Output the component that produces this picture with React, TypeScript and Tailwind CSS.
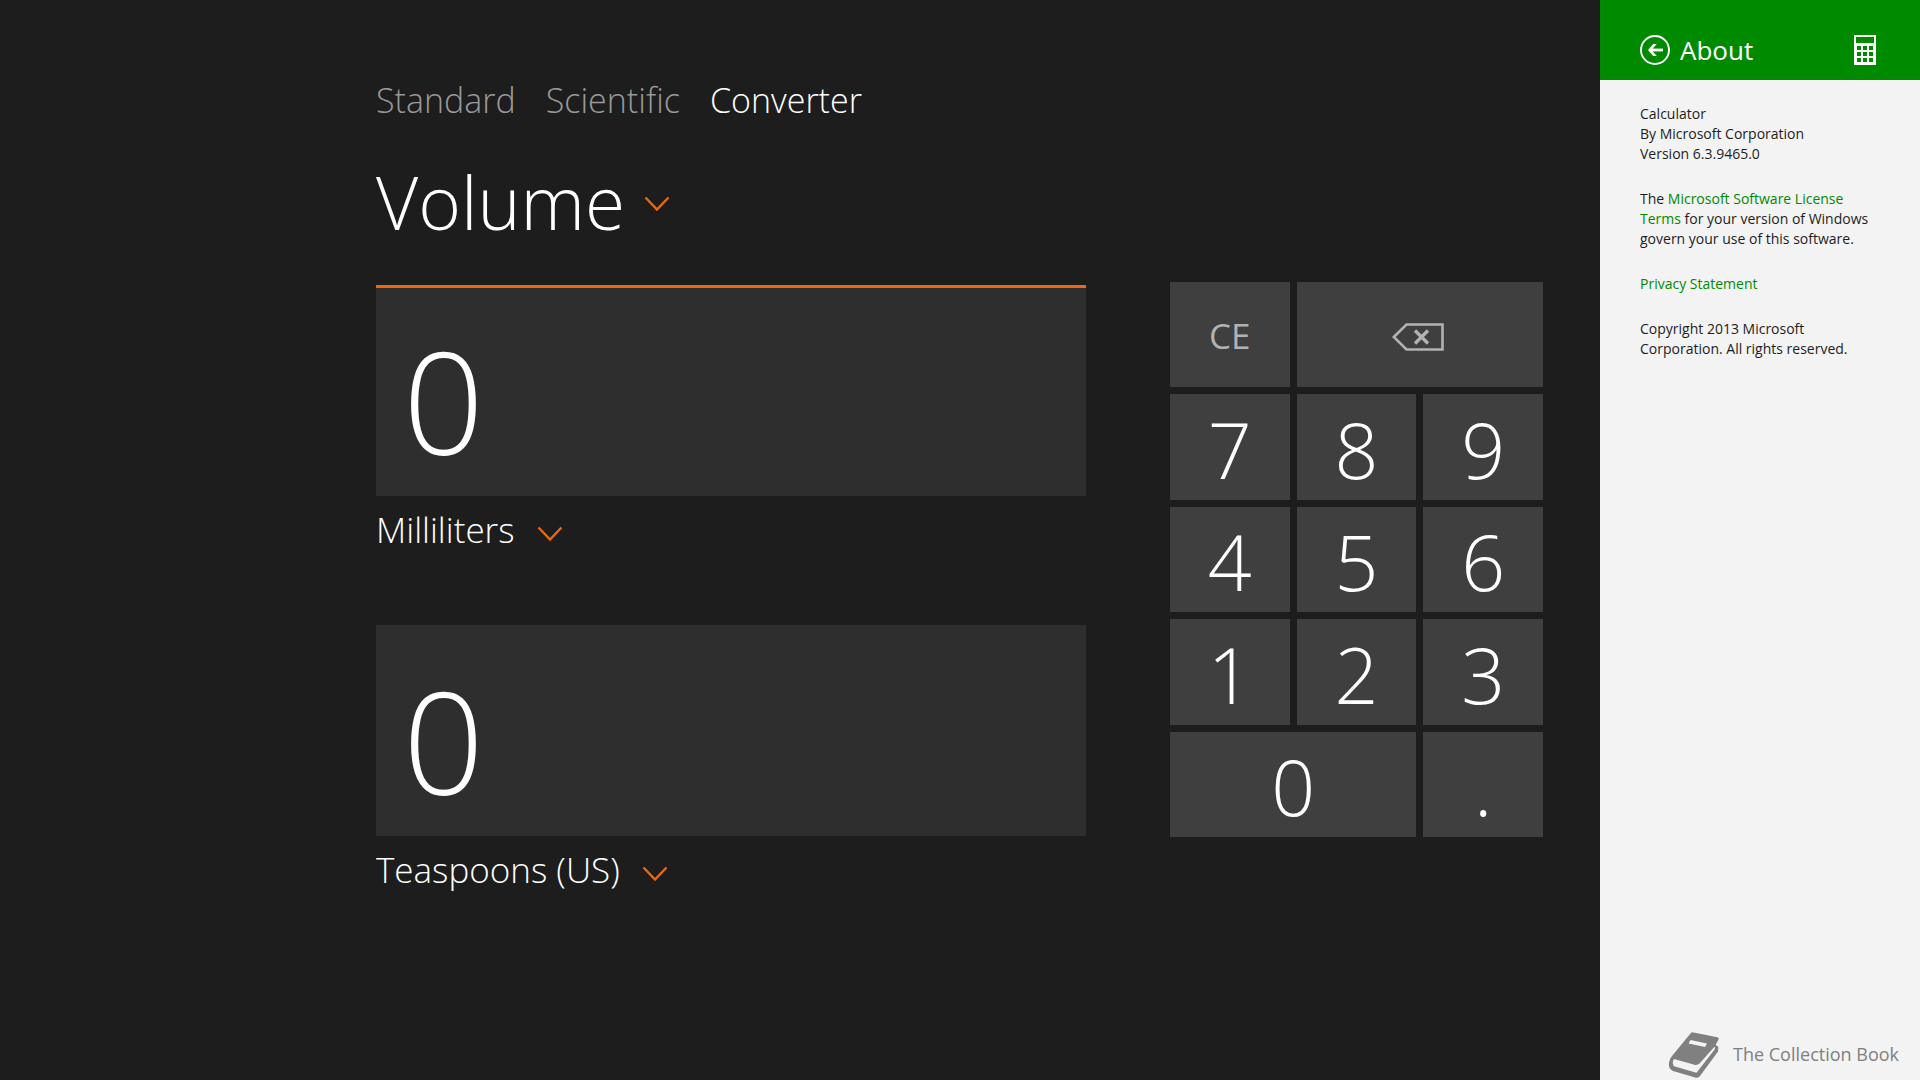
import { useState } from "react";

const tabs = ["Standard", "Scientific", "Converter"];
const digits = ["7", "8", "9", "4", "5", "6", "1", "2", "3"];
const ML_PER_TEASPOON = 4.92892159375;

const App = () => {
  const [activeTab, setActiveTab] = useState("Converter");
  const [value, setValue] = useState("0");

  const press = (key: string) => {
    if (key === "." && value.includes(".")) return;
    setValue(value === "0" && key !== "." ? key : value + key);
  };

  const converted = String(+(Number(value) / ML_PER_TEASPOON).toFixed(4));

  return (
    <div className="flex min-h-screen bg-[#1d1d1d] font-['Open_Sans','Noto_Sans',sans-serif] text-white">
      <main className="flex-1 pt-[72px] pr-[57px] pb-20 pl-[376px]">
        <nav className="flex gap-[30px]">
          {tabs.map((tab) => (
            <button
              key={tab}
              onClick={() => setActiveTab(tab)}
              className={
                tab === activeTab
                  ? "text-[34px] leading-[56px] font-light text-white"
                  : "text-[34px] leading-[56px] font-light text-[#999999]"
              }
            >
              {tab}
            </button>
          ))}
        </nav>

        <h1 className="mt-[22px] mb-7 text-[73px] leading-[104px] font-light">
          <Picker label="Measurement" option="Volume" large />
        </h1>

        <div className="flex items-start gap-[84px]">
          <div className="flex min-w-0 flex-1 flex-col gap-[62px] pt-[3px]">
            <section>
              <Display label="Value in milliliters" value={value} active />
              <Picker label="From unit" option="Milliliters" />
            </section>
            <section>
              <Display label="Value in teaspoons" value={converted} />
              <Picker label="To unit" option="Teaspoons (US)" />
            </section>
          </div>

          <div className="grid h-[555px] w-[373px] shrink-0 grid-cols-3 grid-rows-5 gap-[7px]">
            <button
              onClick={() => setValue("0")}
              className="bg-[#3f3f3f] pt-1 text-[35px] text-[#b2b2b2]"
            >
              CE
            </button>
            <button
              aria-label="Backspace"
              onClick={() => setValue(value.slice(0, -1) || "0")}
              className="col-span-2 flex items-center justify-center bg-[#3f3f3f] pt-1 pr-1 text-[#b2b2b2]"
            >
              <BackspaceIcon />
            </button>
            {digits.map((digit) => (
              <Key key={digit} label={digit} onPress={press} />
            ))}
            <Key label="0" onPress={press} wide />
            <Key label="." onPress={press} />
          </div>
        </div>
      </main>

      <aside className="flex w-80 shrink-0 flex-col bg-[#f3f3f3] text-[#1d1d1d]">
        <header className="flex h-20 items-end bg-[#008a00] pr-11 pb-[15px] pl-10 text-white">
          <button aria-label="Back">
            <BackIcon />
          </button>
          <h2 className="ml-[10px] flex-1 text-[26px] leading-[30px]">About</h2>
          <CalculatorIcon />
        </header>

        <div className="flex flex-1 flex-col gap-[25px] px-10 pt-6 text-[14px] leading-5">
          <p>
            Calculator
            <br />
            By Microsoft Corporation
            <br />
            Version 6.3.9465.0
          </p>
          <p>
            The{" "}
            <a href="#license" className="text-[#008a00]">
              Microsoft Software License
              <br />
              Terms
            </a>{" "}
            for your version of Windows
            <br />
            govern your use of this software.
          </p>
          <a href="#privacy" className="text-[#008a00]">
            Privacy Statement
          </a>
          <p>
            Copyright 2013 Microsoft
            <br />
            Corporation. All rights reserved.
          </p>
        </div>

        <footer className="flex items-center justify-end gap-[13px] pr-[21px] text-[18px] text-[#808080]">
          <BookIcon />
          <span className="pb-0.5">The Collection Book</span>
        </footer>
      </aside>
    </div>
  );
};

// Drop-down with the orange chevron after its text
const Picker = ({
  label,
  option,
  large,
}: {
  label: string;
  option: string;
  large?: boolean;
}) => (
  <span className="relative inline-flex items-center">
    <select
      aria-label={label}
      className={
        large
          ? "appearance-none bg-transparent pr-11 text-[73px] leading-[104px] font-light"
          : "appearance-none bg-transparent pr-12 text-[35px] leading-[67px] font-light"
      }
    >
      <option>{option}</option>
    </select>
    <svg
      viewBox="0 0 26 16"
      className={
        large
          ? "pointer-events-none absolute right-0 mt-1 h-4 w-[26px]"
          : "pointer-events-none absolute right-0 mt-2 h-4 w-[26px]"
      }
      fill="none"
      stroke="#ea690f"
      strokeWidth="2.4"
    >
      <path d="M1.5 1.5 13 13.5 24.5 1.5" />
    </svg>
  </span>
);

const Display = ({
  label,
  value,
  active,
}: {
  label: string;
  value: string;
  active?: boolean;
}) => (
  <input
    aria-label={label}
    value={value}
    readOnly
    className={
      active
        ? "block h-[211px] w-full border-t-3 border-[#ea690f] bg-[#2e2e2e] px-[27px] pt-4 text-[142px] leading-none font-light outline-none"
        : "block h-[211px] w-full border-t-3 border-[#2e2e2e] bg-[#2e2e2e] px-[27px] pt-4 text-[142px] leading-none font-light outline-none"
    }
  />
);

const Key = ({
  label,
  onPress,
  wide,
}: {
  label: string;
  onPress: (key: string) => void;
  wide?: boolean;
}) => (
  <button
    onClick={() => onPress(label)}
    className={
      wide
        ? "col-span-2 bg-[#3f3f3f] pt-1.5 text-[77px] leading-[98px] font-light"
        : "bg-[#3f3f3f] pt-1.5 text-[77px] leading-[98px] font-light"
    }
  >
    {label}
  </button>
);

const BackspaceIcon = () => (
  <svg
    viewBox="0 0 52 28"
    className="h-7 w-[52px]"
    fill="none"
    stroke="currentColor"
  >
    <path d="M1.8 14 14.5 1.5H50.5V26.5H14.5Z" strokeWidth="2.6" />
    <path d="M23 7.5 36 20.5M36 7.5 23 20.5" strokeWidth="3.4" />
  </svg>
);

const BackIcon = () => (
  <svg
    viewBox="0 0 30 30"
    className="block size-[30px]"
    fill="none"
    stroke="currentColor"
  >
    <circle cx="15" cy="15" r="14" strokeWidth="1.9" />
    <path d="M23 15H9.5" strokeWidth="2.8" />
    <path
      d="M8 15 13.2 9H16.8L11.5 15 16.8 21H13.2Z"
      fill="currentColor"
      stroke="none"
    />
  </svg>
);

const CalculatorIcon = () => (
  <svg viewBox="0 0 22 30" className="h-[30px] w-[22px]" fill="currentColor">
    <path
      fillRule="evenodd"
      d="M0 0H22V30H0ZM2 2V8H20V2ZM3 11V15H7V11ZM9 11V15H13V11ZM15 11V15H19V11ZM3 17V21H7V17ZM9 17V21H13V17ZM15 17V21H19V17ZM3 23V27H7V23ZM9 23V27H13V23ZM15 23V27H19V23Z"
    />
  </svg>
);

const BookIcon = () => (
  <svg viewBox="0 -1 52 50" className="h-[50px] w-[52px]">
    <path
      d="M22.500 2.500Q23.500 1 25.500 1.400L49.500 6.300Q51.500 7 50.300 9L48 13V14.500Q50.500 14.500 50.300 17L50 20.500 32 45Q30.500 47.300 28 46.700L5 40Q0 37.500 1 31.500 1.500 28 4 25Z"
      fill="#808080"
    />
    <path
      d="M6 28Q3.500 32 6 35.300L28.500 41.800 47 18 46.700 15.500 31.500 32.500Q29.500 34.500 26.500 33.800Z"
      fill="#f3f3f3"
    />
    <path d="M22.500 9 39 12.500 37 16 20.500 12.500Z" fill="#f3f3f3" />
  </svg>
);

export default App;
